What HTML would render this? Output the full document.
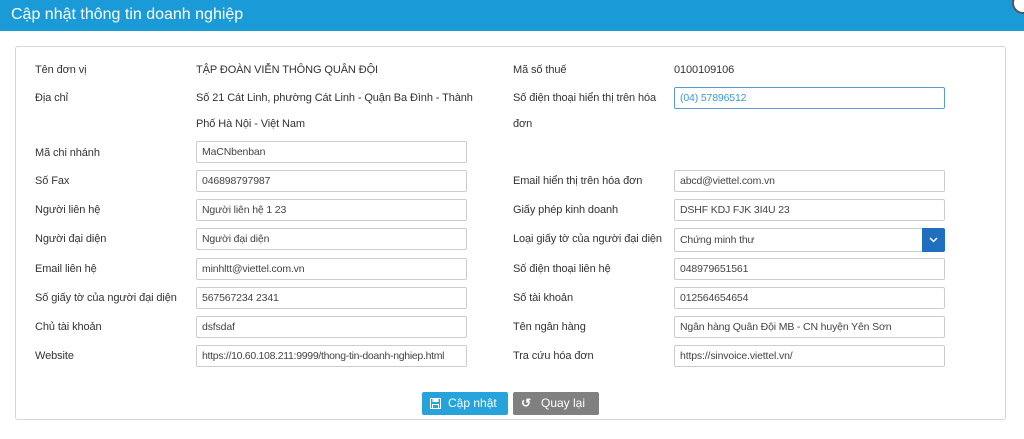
<!DOCTYPE html>
<html><head><meta charset="utf-8"><style>
*{box-sizing:border-box;margin:0;padding:0}
body{width:1024px;height:439px;background:#fff;font-family:"Liberation Sans",Arial,sans-serif;font-size:11px;color:#333;position:relative;overflow:hidden}
.hdr{position:absolute;left:0;top:0;width:1024px;height:31px;background:#1a9bd7;color:#fff;font-size:16px;line-height:30px;padding-left:11px}
.close{position:absolute;right:-10px;top:-8px;width:22px;height:22px;border-radius:50%;background:#fff;border:2px solid #555}
.panel{position:absolute;left:15px;top:46px;width:991px;height:374px;border:1px solid #d6d6d6;border-radius:3px}
.l{position:absolute;white-space:nowrap;letter-spacing:-0.1px}
.in{position:absolute;height:22px;border:1px solid #ccc;border-radius:2px;padding-left:5px;line-height:20px;white-space:nowrap;overflow:hidden;color:#444;font-size:10.5px;letter-spacing:-0.15px}
.btn{position:absolute;top:392px;height:23px;color:#fff;font-size:12px;line-height:23px;border-radius:2px}
</style></head><body>
<div class="hdr">Cập nhật thông tin doanh nghiệp</div>
<div class="close"></div>
<div class="panel"></div>

<div class="l" style="left:35px;top:64px">Tên đơn vị</div>
<div class="l" style="left:196px;top:64px">TẬP ĐOÀN VIỄN THÔNG QUÂN ĐỘI</div>
<div class="l" style="left:513px;top:64px">Mã số thuế</div>
<div class="l" style="left:674px;top:64px">0100109106</div>

<div class="l" style="left:35px;top:92px">Địa chỉ</div>
<div class="l" style="left:196px;top:92px">Số 21 Cát Linh, phường Cát Linh - Quận Ba Đình - Thành</div>
<div class="l" style="left:196px;top:118px">Phố Hà Nội - Việt Nam</div>
<div class="l" style="left:513px;top:92px">Số điện thoại hiển thị trên hóa</div>
<div class="l" style="left:513px;top:118px">đơn</div>
<div class="in" style="left:674px;top:87px;width:271px;border-color:#5b9bd5;color:#3a9ad9">(04) 57896512</div>

<div class="l" style="left:35px;top:147px">Mã chi nhánh</div>
<div class="in" style="left:196px;top:141px;width:271px">MaCNbenban</div>

<div class="l" style="left:35px;top:175px">Số Fax</div>
<div class="in" style="left:196px;top:170px;width:271px">046898797987</div>
<div class="l" style="left:513px;top:175px">Email hiển thị trên hóa đơn</div>
<div class="in" style="left:674px;top:170px;width:271px">abcd@viettel.com.vn</div>

<div class="l" style="left:35px;top:204px">Người liên hệ</div>
<div class="in" style="left:196px;top:199px;width:271px">Người liên hệ 1 23</div>
<div class="l" style="left:513px;top:204px">Giấy phép kinh doanh</div>
<div class="in" style="left:674px;top:199px;width:271px">DSHF KDJ FJK 3I4U 23</div>

<div class="l" style="left:35px;top:233px">Người đại diện</div>
<div class="in" style="left:196px;top:228px;width:271px">Người đại diện</div>
<div class="l" style="left:513px;top:233px">Loại giấy tờ của người đại diện</div>
<div class="in" style="left:674px;top:228px;width:271px;height:24px;line-height:22px">Chứng minh thư</div>
<div style="position:absolute;left:922px;top:228px;width:23px;height:24px;background:#1f6fbf;border-radius:0 2px 2px 0"><svg width="23" height="24"><path d="M8 10l3.5 3.5L15 10" stroke="#fff" stroke-width="1.5" fill="none"/></svg></div>

<div class="l" style="left:35px;top:263px">Email liên hệ</div>
<div class="in" style="left:196px;top:258px;width:271px">minhltt@viettel.com.vn</div>
<div class="l" style="left:513px;top:263px">Số điện thoại liên hệ</div>
<div class="in" style="left:674px;top:258px;width:271px">048979651561</div>

<div class="l" style="left:35px;top:292px">Số giấy tờ của người đại diện</div>
<div class="in" style="left:196px;top:287px;width:271px">567567234 2341</div>
<div class="l" style="left:513px;top:292px">Số tài khoản</div>
<div class="in" style="left:674px;top:287px;width:271px">012564654654</div>

<div class="l" style="left:35px;top:321px">Chủ tài khoản</div>
<div class="in" style="left:196px;top:316px;width:271px">dsfsdaf</div>
<div class="l" style="left:513px;top:321px">Tên ngân hàng</div>
<div class="in" style="left:674px;top:316px;width:271px">Ngân hàng Quân Đội MB - CN huyện Yên Sơn</div>

<div class="l" style="left:35px;top:350px">Website</div>
<div class="in" style="left:196px;top:345px;width:271px;letter-spacing:-0.3px">https://10.60.108.211:9999/thong-tin-doanh-nghiep.html</div>
<div class="l" style="left:513px;top:350px">Tra cứu hóa đơn</div>
<div class="in" style="left:674px;top:345px;width:271px">https://sinvoice.viettel.vn/</div>

<div class="btn" style="left:422px;width:86px;background:#27a3dc"><svg style="position:absolute;left:8px;top:6px" width="11" height="11"><rect x="0.5" y="0.5" width="10" height="10" fill="none" stroke="#fff"/><rect x="2.5" y="0.5" width="6" height="3.5" fill="#fff"/><rect x="2.5" y="6.5" width="6" height="4" fill="none" stroke="#fff"/></svg><span style="position:absolute;left:26px">Cập nhật</span></div>
<div class="btn" style="left:513px;width:86px;background:#808080"><span style="position:absolute;left:8px;top:0;font-weight:bold">↺</span><span style="position:absolute;left:28px">Quay lại</span></div>
</body></html>
